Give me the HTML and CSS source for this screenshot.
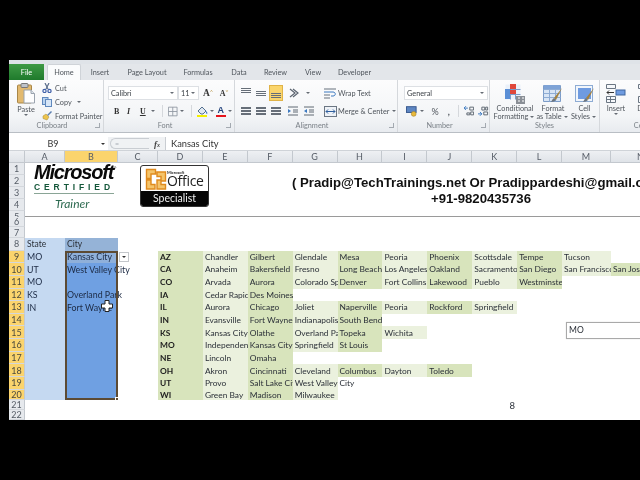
FILE: index.html
```html
<!DOCTYPE html>
<html lang="en">
<head>
  <meta charset="UTF-8">
  <title>Excel - Kansas City</title>
  <link rel="stylesheet" href="styles.css">
</head>
<body>
  <div class="app">
    <div class="titlebar"></div>

    <div class="tabs">
      <div class="tab file">File</div>
      <div class="tab home">Home</div>
      <div class="tab t-insert">Insert</div>
      <div class="tab t-layout">Page Layout</div>
      <div class="tab t-formulas">Formulas</div>
      <div class="tab t-data">Data</div>
      <div class="tab t-review">Review</div>
      <div class="tab t-view">View</div>
      <div class="tab t-dev">Developer</div>
    </div>

    <div class="ribbon">
      <!-- clipboard -->
      <div class="group g-clip">
        <div class="group-body clip-body">
          <div class="paste">
            <svg width="18" height="21" viewBox="0 0 18 21"><rect x="0.5" y="2" width="14" height="18" rx="1" fill="#e2b96f" stroke="#a88648"/><rect x="4" y="0.5" width="7" height="4" rx="1" fill="#bfc3c9" stroke="#777"/><path d="M7 7h7l3.500 3.500V20H7z" fill="#fdfdfe" stroke="#9aa3ae"/><path d="M14 7v3.500h3.500" fill="#dfe5ec" stroke="#9aa3ae"/></svg>
            <span>Paste</span>
            <i class="arrow"></i>
          </div>
          <div class="clip-list">
            <div class="clip-item"><svg width="10" height="10" viewBox="0 0 10 10"><path d="M3 0l3 6M7 0L4 6" stroke="#5a6d8c" stroke-width="1.200" fill="none"/><circle cx="2.500" cy="8" r="1.600" fill="none" stroke="#3f5fa8" stroke-width="1.200"/><circle cx="7.500" cy="8" r="1.600" fill="none" stroke="#3f5fa8" stroke-width="1.200"/></svg><span>Cut</span></div>
            <div class="clip-item"><svg width="10" height="10" viewBox="0 0 10 10"><rect x="0.500" y="0.500" width="5.500" height="7" fill="#b9d2ef" stroke="#5f88bd"/><rect x="3.500" y="2.500" width="6" height="7" fill="#d7e6f7" stroke="#5f88bd"/></svg><span>Copy</span><i class="arrow"></i></div>
            <div class="clip-item"><svg width="10" height="10" viewBox="0 0 10 10"><path d="M5 4l4-4 1 1-4 4z" fill="#5b7fb0"/><path d="M1 5l3-2 3 3-2 3-4-1.500z" fill="#edc44e" stroke="#a58a32" stroke-width=".5"/></svg><span>Format Painter</span></div>
          </div>
        </div>
        <div class="group-label"><span>Clipboard</span><i class="launch"></i></div>
      </div>

      <!-- font -->
      <div class="group g-font">
        <div class="group-body font-body">
          <div class="tool-row">
            <div class="combo font-name"><span>Calibri</span><i class="arrow"></i></div>
            <div class="combo font-size"><span>11</span><i class="arrow"></i></div>
            <span class="grow-a">A<sup>&#708;</sup></span>
            <span class="shrink-a">A<sup>&#709;</sup></span>
          </div>
          <div class="tool-row fmt-row">
            <b class="fmt">B</b>
            <i class="fmt ital">I</i>
            <u class="fmt und">U</u>
            <i class="arrow"></i>
            <i class="vsep"></i>
            <svg width="11" height="11" viewBox="0 0 11 11"><path d="M.5.500h10v10H.500zM5.500.500v10M.5 5.500h10" fill="none" stroke="#8f97a1"/></svg>
            <i class="arrow"></i>
            <i class="vsep"></i>
            <span class="paint"><svg width="11" height="9" viewBox="0 0 11 9"><path d="M1 5l4-4 4 4-3 3H4z" fill="#dfe8f2" stroke="#54708f"/><path d="M9 5c1 1 2 2 1 3-1 0-1-2-1-3z" fill="#3a78c0"/></svg><i class="swatch yellow"></i></span>
            <i class="arrow"></i>
            <span class="paint"><b class="color-a">A</b><i class="swatch red"></i></span>
            <i class="arrow"></i>
          </div>
        </div>
        <div class="group-label"><span>Font</span><i class="launch"></i></div>
      </div>

      <!-- alignment -->
      <div class="group g-align">
        <div class="group-body align-body">
          <div class="align-left">
            <div class="tool-row align-row">
              <i class="al top"></i>
              <i class="al mid"></i>
              <i class="al bot on"></i>
              <svg class="orient" width="12" height="10" viewBox="0 0 12 10"><path d="M1 1l5 4-5 4M4 1l5 4-5 4" fill="none" stroke="#5b6470" stroke-width="1.200"/></svg>
              <i class="arrow"></i>
            </div>
            <div class="tool-row align-row">
              <i class="al lines"></i>
              <i class="al lines"></i>
              <i class="al lines"></i>
              <svg class="indent" width="10" height="10" viewBox="0 0 10 10"><path d="M0 1h10M5 4h5M5 6h5M0 9h10" stroke="#5f6873"/><path d="M0 3l3 2-3 2z" fill="#3a78c0"/></svg>
              <svg class="indent" width="10" height="10" viewBox="0 0 10 10"><path d="M0 1h10M5 4h5M5 6h5M0 9h10" stroke="#5f6873"/><path d="M3 3L0 5l3 2z" fill="#3a78c0"/></svg>
            </div>
          </div>
          <i class="vsep tall"></i>
          <div class="wrap-col">
            <div class="wrap-item"><svg width="13" height="11" viewBox="0 0 13 11"><path d="M0 1h12M0 10h6M0 7h6" stroke="#66707c"/><path d="M0 4h9c3 0 3 4 0 4H7" fill="none" stroke="#3a78c0"/></svg><span>Wrap Text</span></div>
            <div class="wrap-item"><svg width="13" height="11" viewBox="0 0 13 11"><rect x=".5" y=".5" width="12" height="10" fill="#eef2f7" stroke="#6b7683"/><path d="M2 5.500h9M2 5.500l2-2M2 5.500l2 2M11 5.500l-2-2M11 5.500l-2 2" stroke="#2f5f9e" fill="none"/></svg><span>Merge &amp; Center</span><i class="arrow"></i></div>
          </div>
        </div>
        <div class="group-label"><span>Alignment</span><i class="launch"></i></div>
      </div>

      <!-- number -->
      <div class="group g-num">
        <div class="group-body num-body">
          <div class="combo num-format"><span>General</span><i class="arrow"></i></div>
          <div class="tool-row num-row">
            <svg width="12" height="11" viewBox="0 0 12 11"><rect x=".5" y=".5" width="10" height="6" fill="#5d86c2" stroke="#38598f"/><circle cx="8" cy="8" r="2.500" fill="#e8b93c" stroke="#a47f20" stroke-width=".6"/></svg>
            <i class="arrow"></i>
            <span class="pct">%</span>
            <span class="comma">,</span>
            <i class="vsep"></i>
            <svg width="11" height="10" viewBox="0 0 11 10"><path d="M0 2h4M2 0l-2 2 2 2" fill="none" stroke="#3a78c0"/><path d="M6 1h4v3H6zM3 7h3v2H3zM7 6h3v3H7z" fill="none" stroke="#5f6873"/></svg>
            <svg width="11" height="10" viewBox="0 0 11 10"><path d="M0 8h4M2 6l2 2-2 2" fill="none" stroke="#3a78c0"/><path d="M4 1h3v3H4zM8 1h2v3H8zM6 6h4v3H6z" fill="none" stroke="#5f6873"/></svg>
          </div>
        </div>
        <div class="group-label"><span>Number</span><i class="launch"></i></div>
      </div>

      <!-- styles -->
      <div class="group g-styles">
        <div class="group-body styles-body">
          <div class="big-btn b-cond">
            <svg width="20" height="20" viewBox="0 0 20 20"><path d="M.5.500h15v15H.500z" fill="#eaf1fa"/><path d="M.5 5.500h15M.5 10.500h15M5.500.500v15M10.500.500v15" stroke="#7c9cc8"/><path d="M5 0h6v5H5z" fill="#e0473b"/><path d="M0 5h6v5H0zM0 10h5v5H0z" fill="#5b8fd6"/><path d="M5 6h6v4H5z" fill="#e0473b"/><rect x="11" y="12" width="9" height="8" fill="#8a8f96"/><path d="M13 14h2M17 14h2M13 17h2M17 17h2" stroke="#fff"/></svg>
            <span>Conditional</span>
            <span>Formatting<i class="arrow"></i></span>
          </div>
          <div class="big-btn b-table">
            <svg width="20" height="20" viewBox="0 0 20 20"><path d="M.5 1.500h17v16H.500z" fill="#d8e5f5" stroke="#7c9cc8"/><path d="M.5 5.500h17M.5 9.500h17M.5 13.500h17M6.500 1.500v16M12.500 1.500v16" stroke="#8eacd4"/><path d="M1 1h16v4H1z" fill="#7fa3d6"/><path d="M19 4L11 14l2 2z" fill="#a5813c"/><path d="M11 14c-2 1-2 3-3 4 2 0 4-1 5-2z" fill="#6d7680"/></svg>
            <span>Format</span>
            <span>as Table<i class="arrow"></i></span>
          </div>
          <div class="big-btn b-cell">
            <svg width="20" height="20" viewBox="0 0 20 20"><rect x=".5" y="1.500" width="17" height="16" fill="#f2f6fb" stroke="#8eacd4"/><rect x="3" y="4" width="13" height="11" fill="#6f9be0"/><path d="M19 4L11 14l2 2z" fill="#a5813c"/><path d="M11 14c-2 1-2 3-3 4 2 0 4-1 5-2z" fill="#6d7680"/></svg>
            <span>Cell</span>
            <span>Styles<i class="arrow"></i></span>
          </div>
        </div>
        <div class="group-label"><span>Styles</span></div>
      </div>

      <!-- cells, runs off the edge -->
      <div class="group g-cells">
        <div class="group-body cells-body">
          <div class="big-btn b-insert">
            <svg width="20" height="20" viewBox="0 0 20 20"><path d="M.5.500h9v4h-9zM.5 12.500h9v6h-9zM4.500 12.500v6M.5 15.500h9" fill="#f6f8fb" stroke="#6b7683"/><rect x="10" y="6" width="9" height="5" fill="#6f9be0" stroke="#41679f"/><path d="M1 8.500h7M1 8.500l2-2M1 8.500l2 2" stroke="#333" fill="none"/></svg>
            <span>Insert</span>
            <i class="arrow"></i>
          </div>
          <div class="big-btn b-delete">
            <svg width="20" height="20" viewBox="0 0 20 20"><path d="M.5.500h9v4h-9zM.5 12.500h9v6h-9z" fill="#f6f8fb" stroke="#6b7683"/></svg>
            <span>Delete</span>
          </div>
        </div>
        <div class="group-label"><span>Cells</span></div>
      </div>
    </div>

    <div class="formula-bar">
      <div class="name-box"><span>B9</span><i class="arrow dark"></i></div>
      <div class="fx-pill"><i class="pill-mark">=</i></div>
      <div class="fx">f<sub>x</sub></div>
      <div class="formula-input">Kansas City</div>
    </div>

    <div class="sheet">
      <div class="row col-heads">
        <div class="corner"></div>
        <div>A</div><div class="sel">B</div><div>C</div><div>D</div><div>E</div><div>F</div><div>G</div><div>H</div><div>I</div><div>J</div><div>K</div><div>L</div><div>M</div><div>N</div>
      </div>

      <div class="banner-rows">
        <div class="banner-heads">
          <div class="rh">1</div><div class="rh">2</div><div class="rh">3</div><div class="rh">4</div><div class="rh">5</div>
        </div>
        <div class="banner">
          <div class="mct">
            <div class="mct-ms">Microsoft<sup>&reg;</sup></div>
            <div class="mct-cert">CERTIFIED</div>
            <div class="mct-trainer">Trainer</div>
          </div>
          <div class="badge">
            <div class="badge-top">
              <svg width="22" height="22" viewBox="0 0 22 22"><path d="M1.500 1.500h9v4.500h-4.500v4.500h-4.500zM12 4h8.500v9H16V8.500h-4zM1.500 12h4.500v4.500H10V21H1.500zM12 12h4v4.500h4.500V21H12z" fill="#f5c46a" stroke="#df8a1e" stroke-width="1.400"/></svg>
              <div class="badge-name"><small>Microsoft</small><span>Office</span></div>
            </div>
            <div class="badge-bottom">Specialist</div>
          </div>
          <div class="contact">
            <div>( Pradip@TechTrainings.net Or Pradippardeshi@gmail.com )</div>
            <div>+91-9820435736</div>
          </div>
        </div>
      </div>

      <div class="row"><div class="rh">6</div></div>
      <div class="row"><div class="rh">7</div></div>

      <div class="row tall head8"><div class="rh">8</div><div class="a">State</div><div class="b8">City</div></div>

      <div class="row tall data"><div class="rh sel">9</div><div class="a">MO</div><div class="b active">Kansas City</div><div class="c9"><span class="drop"><i class="arrow dark"></i></span></div>
        <div class="t st">AZ</div><div class="t">Chandler</div><div class="t">Gilbert</div><div class="t">Glendale</div><div class="t">Mesa</div><div class="t">Peoria</div><div class="t">Phoenix</div><div class="t">Scottsdale</div><div class="t">Tempe</div><div class="t">Tucson</div></div>
      <div class="row tall data"><div class="rh sel">10</div><div class="a">UT</div><div class="b spill">West Valley City</div><div></div>
        <div class="t st">CA</div><div class="t">Anaheim</div><div class="t">Bakersfield</div><div class="t">Fresno</div><div class="t">Long Beach</div><div class="t">Los Angeles</div><div class="t">Oakland</div><div class="t">Sacramento</div><div class="t">San Diego</div><div class="t">San Francisco</div><div class="t">San Jose</div></div>
      <div class="row tall data"><div class="rh sel">11</div><div class="a">MO</div><div class="b"></div><div></div>
        <div class="t st">CO</div><div class="t">Arvada</div><div class="t">Aurora</div><div class="t">Colorado Springs</div><div class="t">Denver</div><div class="t">Fort Collins</div><div class="t">Lakewood</div><div class="t">Pueblo</div><div class="t">Westminster</div></div>
      <div class="row tall data"><div class="rh sel">12</div><div class="a">KS</div><div class="b spill">Overland Park</div><div></div>
        <div class="t st">IA</div><div class="t">Cedar Rapids</div><div class="t">Des Moines</div></div>
      <div class="row tall data"><div class="rh sel">13</div><div class="a">IN</div><div class="b">Fort Wayne</div><div></div>
        <div class="t st">IL</div><div class="t">Aurora</div><div class="t">Chicago</div><div class="t">Joliet</div><div class="t">Naperville</div><div class="t">Peoria</div><div class="t">Rockford</div><div class="t">Springfield</div></div>
      <div class="row tall data"><div class="rh sel">14</div><div class="a"></div><div class="b"></div><div></div>
        <div class="t st">IN</div><div class="t">Evansville</div><div class="t">Fort Wayne</div><div class="t">Indianapolis</div><div class="t">South Bend</div></div>
      <div class="row tall data"><div class="rh sel">15</div><div class="a"></div><div class="b"></div><div></div>
        <div class="t st">KS</div><div class="t">Kansas City</div><div class="t">Olathe</div><div class="t">Overland Park</div><div class="t">Topeka</div><div class="t">Wichita</div></div>
      <div class="row tall data"><div class="rh sel">16</div><div class="a"></div><div class="b"></div><div></div>
        <div class="t st">MO</div><div class="t">Independence</div><div class="t">Kansas City</div><div class="t">Springfield</div><div class="t">St Louis</div></div>
      <div class="row tall data"><div class="rh sel">17</div><div class="a"></div><div class="b"></div><div></div>
        <div class="t st">NE</div><div class="t">Lincoln</div><div class="t">Omaha</div></div>
      <div class="row tall data"><div class="rh sel">18</div><div class="a"></div><div class="b"></div><div></div>
        <div class="t st">OH</div><div class="t">Akron</div><div class="t">Cincinnati</div><div class="t">Cleveland</div><div class="t">Columbus</div><div class="t">Dayton</div><div class="t">Toledo</div></div>
      <div class="row tall data"><div class="rh sel">19</div><div class="a"></div><div class="b"></div><div></div>
        <div class="t st">UT</div><div class="t">Provo</div><div class="t">Salt Lake City</div><div class="t spill">West Valley City</div></div>
      <div class="row short data"><div class="rh sel">20</div><div class="a"></div><div class="b"></div><div></div>
        <div class="t st">WI</div><div class="t">Green Bay</div><div class="t">Madison</div><div class="t">Milwaukee</div></div>

      <div class="row r21"><div class="rh">21</div><div class="page-no">8</div></div>
      <div class="row r22"><div class="rh">22</div></div>

      <!-- things lying over the grid -->
      <div class="selection"><i class="handle"></i></div>
      <svg class="cursor" width="12" height="12" viewBox="0 0 12 12"><path d="M4 .5h4V4h3.500v4H8v3.500H4V8H.5V4H4z" fill="#fff" stroke="#222"/></svg>
      <div class="textbox">MO</div>
    </div>
  </div>
</body>
</html>
```

FILE: styles.css
```css
:root {
  --cols: 16px 40px 53px 40px repeat(9, 44.9px) 49px 60px;
  --ui-text: #4f555c;
  --cell-text: #2b3038;
  --head: #e6e9ed;
  --head-line: #c3c8ce;
  --sel-head: #fbd46d;
}
* {
  margin: 0;
  padding: 0;
  box-sizing: border-box;
}
html, body {
  height: 100%;
  background: #000;
  overflow: hidden;
}
body {
  padding: 60px 0 60px 9px;
  font-family: "Lato", sans-serif;
  font-size: 7.300px;
  color: var(--ui-text);
}
i {
  font-style: normal;
}
.app {
  width: 631px;
  height: 360px;
  overflow: hidden;
  background: #fff;
  display: flex;
  flex-direction: column;
  filter: blur(.35px);
}

/* title + tabs */
.titlebar {
  height: 4px;
  background: #dfe3e8;
}
.tabs {
  height: 16px;
  display: flex;
  align-items: stretch;
  background: #e3e6ea;
}
.tab {
  display: flex;
  align-items: center;
  justify-content: center;
  white-space: nowrap;
}
.file {
  width: 35px;
  background: linear-gradient(#3f9a45, #1f7a2c);
  color: #fff;
}
.home {
  width: 34px;
  margin-left: 3px;
  background: #fbfcfd;
  border: 1px solid #cfd3d8;
  border-bottom: none;
  border-radius: 2px 2px 0 0;
}
.t-insert { width: 22px; margin-left: 8px; }
.t-layout { width: 40px; margin-left: 16px; }
.t-formulas { width: 30px; margin-left: 16px; }
.t-data { width: 16px; margin-left: 18px; }
.t-review { width: 23px; margin-left: 17px; }
.t-view { width: 18px; margin-left: 17px; }
.t-dev { width: 33px; margin-left: 16px; }

/* ribbon */
.ribbon {
  height: 53px;
  flex: none;
  display: flex;
  overflow: hidden;
  background: linear-gradient(#fcfcfd, #f3f5f7 70%, #e8ebef);
  border-bottom: 1px solid #b9bec4;
}
.group {
  display: flex;
  flex-direction: column;
  flex: none;
  border-right: 1px solid #d5d8dc;
}
.group-body {
  flex: 1;
  min-height: 0;
}
.group-label {
  height: 11px;
  display: flex;
  align-items: center;
  padding-bottom: 2px;
  color: #7b8188;
}
.group-label span {
  flex: 1;
  text-align: center;
}
.launch {
  width: 5px;
  height: 5px;
  margin-right: 3px;
  border: 1px solid #a3a9b0;
  border-width: 0 1px 1px 0;
}
.arrow {
  display: inline-block;
  width: 0;
  height: 0;
  margin: 0 2px;
  border: 2px solid transparent;
  border-top: 2.500px solid #666c74;
  border-bottom: none;
  vertical-align: middle;
}
.arrow.dark {
  border-top-color: #333;
}
.vsep {
  width: 1px;
  height: 12px;
  background: #d5d8dc;
}
.tool-row {
  display: flex;
  align-items: center;
}
.combo {
  height: 14px;
  display: flex;
  align-items: center;
  justify-content: space-between;
  padding: 0 1px 0 2px;
  background: #fff;
  border: 1px solid #dde0e4;
  color: #3d4248;
}

.g-clip { width: 95px; }
.clip-body {
  display: flex;
  padding: 3px 0 0 6px;
}
.paste {
  width: 22px;
  display: flex;
  flex-direction: column;
  align-items: center;
  line-height: 9px;
}
.paste svg {
  margin-bottom: 1px;
}
.clip-list {
  margin: -2px 0 0 5px;
}
.clip-item {
  height: 14px;
  display: flex;
  align-items: center;
  gap: 3px;
  white-space: nowrap;
}
.g-font { width: 131px; }
.font-body {
  padding: 6px 0 0 4px;
}
.font-name { width: 70px; }
.font-size { width: 21px; }
.grow-a {
  margin-left: 4px;
  font: bold 9.500px "Liberation Serif", serif;
  color: #333;
}
.shrink-a {
  margin-left: 7px;
  font: bold 8px "Liberation Serif", serif;
  color: #333;
}
.grow-a sup, .shrink-a sup {
  font-size: 5px;
  color: #b08a32;
}
.fmt-row {
  margin-top: 4px;
  padding-left: 6px;
  height: 14px;
}
.fmt {
  width: 15px;
  font: bold 8px "Liberation Serif", serif;
  color: #333;
}
.ital { font-style: italic; }
.und { width: 11px; }
.fmt-row .vsep { margin: 0 5px; }
.paint {
  width: 12px;
  display: flex;
  flex-direction: column;
  align-items: center;
}
.swatch {
  width: 10px;
  height: 2px;
}
.yellow { background: #f4f000; }
.red { background: #e5141c; }
.color-a {
  font: bold 9px/9px "Liberation Sans", sans-serif;
  color: #1f3f7a;
}
.g-align { width: 163px; }
.align-body {
  display: flex;
  padding: 6px 0 0 5px;
}
.align-row {
  height: 14px;
  gap: 3px;
  margin-bottom: 4px;
}
.al {
  width: 12px;
  height: 14px;
  position: relative;
  display: block;
  background-repeat: no-repeat;
  background-size: 10px 1px, 10px 1px, 10px 1px;
  background-image: linear-gradient(#666e78, #666e78), linear-gradient(#666e78, #666e78), linear-gradient(#666e78, #666e78);
}
.al.top { background-position: 1px 2px, 1px 4px, 1px 6px; }
.al.mid { background-position: 1px 5px, 1px 7px, 1px 9px; }
.al.bot { background-position: 1px 7px, 1px 9px, 1px 11px; }
.al.lines { background-position: 1px 3px, 1px 6px, 1px 9px; background-size: 10px 2px, 10px 2px, 10px 2px; }
.al.on {
  background-color: #fad56c;
  outline: 1px solid #e0b348;
}
.orient { margin-left: 4px; }
.indent { margin-left: 3px; }
.vsep.tall {
  height: 30px;
  margin: 0 4px 0 6px;
}
.wrap-item {
  height: 14px;
  margin-bottom: 4px;
  display: flex;
  align-items: center;
  gap: 1px;
  white-space: nowrap;
}
.g-num { width: 92px; }
.num-body {
  padding: 6px 0 0 6px;
}
.num-format { width: 84px; }
.num-row {
  height: 14px;
  margin-top: 4px;
  padding-left: 2px;
}
.pct {
  margin-left: 6px;
  font-size: 9px;
}
.comma {
  margin-left: 9px;
  margin-right: 8px;
  font-weight: bold;
  font-size: 9px;
}
.num-row svg + svg {
  margin-left: 4px;
}
.num-row .vsep {
  margin-right: 5px;
}
.g-styles { width: 110px; }
.styles-body, .cells-body {
  display: flex;
  padding-top: 4px;
}
.styles-body { padding-left: 3px; }
.big-btn {
  flex: none;
  display: flex;
  flex-direction: column;
  align-items: center;
  line-height: 8px;
  white-space: nowrap;
}
.big-btn svg {
  margin-bottom: 1px;
}
.b-cond { width: 44px; }
.b-table { width: 32px; }
.b-cell { width: 31px; }
.g-cells { width: 84px; }
.b-insert { width: 32px; }
.b-delete { width: 32px; }

/* formula bar */
.formula-bar {
  height: 13px;
  margin-top: 4px;
  flex: none;
  display: flex;
  align-items: center;
  background: #f0f2f4;
}
.name-box {
  width: 99px;
  height: 100%;
  display: flex;
  align-items: center;
  background: #fff;
  font-size: 9px;
  color: #333;
}
.name-box span {
  width: 88px;
  text-align: center;
}
.name-box .arrow {
  margin-left: 4px;
}
.fx-pill {
  width: 39px;
  height: 11px;
  margin-left: 2px;
  padding-left: 4px;
  border: 1px solid #c9cdd2;
  border-right: none;
  border-radius: 6px 0 0 6px;
  font-size: 7px;
  line-height: 9px;
  color: #a7adb4;
}
.fx {
  width: 16px;
  text-align: center;
  font: italic bold 9px "Liberation Serif", serif;
  color: #444;
}
.fx sub { font-size: 6px; vertical-align: baseline; }
.formula-input {
  flex: 1;
  height: 100%;
  padding-left: 5px;
  background: #fff;
  border-left: 1px solid #c9cdd2;
  font-size: 9.300px;
  line-height: 13px;
  color: #333;
}

/* sheet */
.sheet {
  flex: 1;
  min-height: 0;
  position: relative;
  overflow: hidden;
  background: #fff;
  font-size: 8.800px;
  color: var(--cell-text);
}
.row {
  display: grid;
  grid-template-columns: var(--cols);
  height: 10.700px;
  line-height: 1;
}
.row > div {
  display: flex;
  align-items: center;
  padding-left: 2px;
  overflow: hidden;
  white-space: nowrap;
}
.row.tall { height: 12.670px; }
.row.short { height: 10px; }
.row.r21 { height: 10.500px; }
.row.r22 { height: 10px; }
.col-heads {
  height: 13px;
  background: linear-gradient(#eef0f3, #dfe3e8);
  border-top: 1px solid #cfd3d8;
  border-bottom: 1px solid var(--head-line);
}
.col-heads > div {
  justify-content: center;
  padding: 0;
  border-right: 1px solid var(--head-line);
  font-size: 9px;
  color: #555c66;
}
.col-heads > .sel {
  background: var(--sel-head);
}
.row > .rh, .rh {
  display: flex;
  align-items: center;
  justify-content: center;
  padding: 0;
  background: var(--head);
  border-right: 1px solid var(--head-line);
  border-bottom: 1px solid #d3d7dc;
  font-size: 9px;
  color: #555c66;
}
.row > .rh.sel {
  background: var(--sel-head);
  color: #4b4a3e;
}
.banner-rows {
  display: flex;
  height: 53.500px;
}
.banner-heads {
  width: 16px;
  flex: none;
  display: flex;
  flex-direction: column;
}
.banner-heads .rh {
  flex: 1;
}
.banner {
  flex: 1;
  min-width: 0;
  display: flex;
  overflow: hidden;
  padding-left: 9px;
  border-bottom: 1px solid #9a9a9a;
}
.mct {
  width: 80px;
  flex: none;
  padding-top: 1px;
}
.mct-ms {
  font: italic bold 20px/17px "Liberation Sans", sans-serif;
  letter-spacing: -1.200px;
  color: #0a0a0a;
  white-space: nowrap;
}
.mct-ms sup {
  font-size: 4px;
  letter-spacing: 0;
  font-weight: normal;
  vertical-align: 10px;
  line-height: 0;
}
.mct-cert {
  height: 13px;
  margin-bottom: 2px;
  border-bottom: 1px solid #8aa596;
  font: bold 8.500px/12px "Liberation Sans", sans-serif;
  letter-spacing: 3.900px;
  color: #14573a;
  white-space: nowrap;
}
.mct-trainer {
  padding-left: 21px;
  font: italic 12px/16px "Lato", sans-serif;
  color: #2d6a50;
}
.badge {
  width: 69px;
  height: 42px;
  flex: none;
  margin: 2px 0 0 26px;
  display: flex;
  flex-direction: column;
  overflow: hidden;
  background: #fff;
  border: 1px solid #333;
  border-radius: 3px;
}
.badge-top {
  height: 25px;
  display: flex;
  align-items: center;
  padding: 1px 0 0 4px;
}
.badge-name {
  display: flex;
  flex-direction: column;
  line-height: 1;
  color: #222;
}
.badge-name small {
  font-size: 4px;
  margin-bottom: -1px;
  font-weight: bold;
}
.badge-name span {
  font: 14px/14px "Open Sans", sans-serif;
  letter-spacing: -.3px;
}
.badge-bottom {
  flex: 1;
  background: #050505;
  color: #f2f2f2;
  text-align: center;
  font: 10.500px/15px "Lato", sans-serif;
}
.contact {
  flex: none;
  width: 378px;
  margin-left: 83px;
  padding-top: 12px;
  text-align: center;
  font: bold 13.200px/16px "Liberation Sans", sans-serif;
  color: #111;
  white-space: nowrap;
}
.row > .a {
  background: #c5d9f1;
}
.row > .b8 {
  background: #95b3d7;
}
.head8 > div {
  font-size: 8.500px;
}
.row > .b {
  background: #6fa0e2;
}
.row > .b.active {
  background: #8fb0da;
}
.data > .a, .data > .b {
  padding-top: 1px;
  color: #1c2a44;
}
.row > .spill,
.row > .t.spill {
  overflow: visible;
}
.row > .b.spill {
  overflow: visible;
}
.row > .t {
  background: #ebf1de;
  font-size: 8.400px;
}
.row > .t:nth-child(odd) {
  background: #d8e4bc;
}
.row > .t.st {
  font-weight: bold;
  color: #222;
}
.row > .c9 {
  align-items: flex-start;
  padding: 1px 0 0 1px;
  overflow: visible;
}
.drop {
  width: 10px;
  height: 10px;
  display: flex;
  align-items: center;
  justify-content: center;
  background: #fff;
  border: 1px solid #c4c7cb;
}
.drop .arrow {
  margin: 0;
}
.page-no {
  grid-column: 12;
  justify-content: flex-end;
  padding-right: 2px;
  font: 9.500px "Liberation Sans Narrow", "Lato", sans-serif;
}

/* overlays */
.selection {
  position: absolute;
  left: 56px;
  top: 101px;
  width: 53px;
  height: 149px;
  border: 2px solid #5c4a33;
  pointer-events: none;
}
.handle {
  position: absolute;
  right: -3px;
  bottom: -3px;
  width: 4px;
  height: 4px;
  background: #5c4a33;
  border: 1px solid #fff;
}
.cursor {
  position: absolute;
  left: 92px;
  top: 150px;
}
.textbox {
  position: absolute;
  left: 557px;
  top: 172px;
  width: 100px;
  height: 17px;
  padding: 2px 2px;
  background: #fff;
  border: 1px solid #a9a9a9;
  box-shadow: 0 0 1px #ccc;
  font-size: 8.500px;
  line-height: 11px;
}
```
